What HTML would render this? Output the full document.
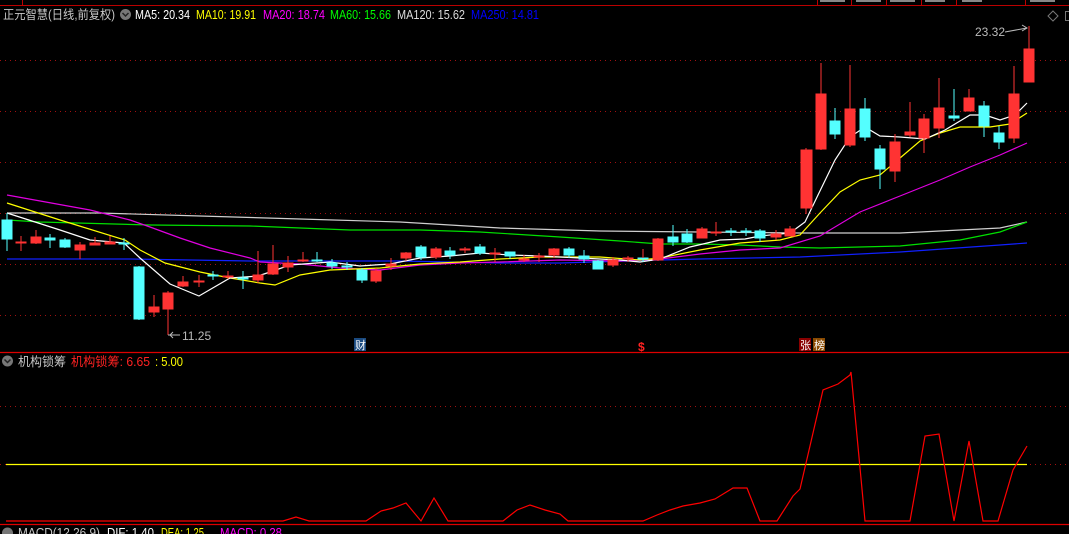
<!DOCTYPE html>
<html><head><meta charset="utf-8"><style>
html,body{margin:0;padding:0;background:#000;width:1069px;height:534px;overflow:hidden}
svg{display:block}
text{font-family:"Liberation Sans","Noto Sans CJK SC",sans-serif}
</style></head><body>
<svg width="1069" height="534" viewBox="0 0 1069 534" xmlns="http://www.w3.org/2000/svg">
<rect width="1069" height="534" fill="#000"/>
<line x1="0" y1="5.5" x2="1069" y2="5.5" stroke="#b00" stroke-width="1"/>
<line x1="22.5" y1="0" x2="22.5" y2="5" stroke="#b00"/>
<g stroke="#b00"><line x1="817.5" y1="0" x2="817.5" y2="5"/><line x1="851.5" y1="0" x2="851.5" y2="5"/><line x1="886.5" y1="0" x2="886.5" y2="5"/><line x1="921.5" y1="0" x2="921.5" y2="5"/><line x1="956.5" y1="0" x2="956.5" y2="5"/><line x1="1025.5" y1="0" x2="1025.5" y2="5"/></g>
<g fill="#888"><rect x="820" y="0" width="25" height="2"/><rect x="856" y="0" width="25" height="2"/><rect x="890" y="0" width="25" height="2"/><rect x="925" y="0" width="20" height="2"/><rect x="962" y="0" width="20" height="2"/><rect x="1030" y="0" width="25" height="2"/></g>
<text x="3" y="19" font-size="12.5" fill="#c8c8c8" textLength="112" lengthAdjust="spacingAndGlyphs">正元智慧(日线,前复权)</text>
<circle cx="125.5" cy="14.5" r="5.5" fill="#777"/><path d="M122.5 13l3 3 3-3" stroke="#222" stroke-width="1.5" fill="none"/>
<text x="135" y="19" font-size="12.5" fill="#fff" textLength="55" lengthAdjust="spacingAndGlyphs">MA5: 20.34</text>
<text x="196" y="19" font-size="12.5" fill="#ff0" textLength="60" lengthAdjust="spacingAndGlyphs">MA10: 19.91</text>
<text x="263" y="19" font-size="12.5" fill="#f0f" textLength="62" lengthAdjust="spacingAndGlyphs">MA20: 18.74</text>
<text x="330" y="19" font-size="12.5" fill="#0f0" textLength="61" lengthAdjust="spacingAndGlyphs">MA60: 15.66</text>
<text x="397" y="19" font-size="12.5" fill="#ddd" textLength="68" lengthAdjust="spacingAndGlyphs">MA120: 15.62</text>
<text x="471" y="19" font-size="12.5" fill="#00f" textLength="68" lengthAdjust="spacingAndGlyphs">MA250: 14.81</text>
<path d="M1053 11l5 5-5 5-5-5z" stroke="#777" fill="none"/>
<rect x="1065.5" y="11.5" width="8" height="9" stroke="#777" fill="none"/>
<g stroke="#a01010" stroke-dasharray="1,4">
<line x1="0" y1="60.5" x2="1069" y2="60.5"/><line x1="0" y1="111.5" x2="1069" y2="111.5"/><line x1="0" y1="162.5" x2="1069" y2="162.5"/><line x1="0" y1="213.5" x2="1069" y2="213.5"/><line x1="0" y1="264.5" x2="1069" y2="264.5"/><line x1="0" y1="315.5" x2="1069" y2="315.5"/>
<line x1="0" y1="406.5" x2="1069" y2="406.5"/><line x1="0" y1="464.5" x2="1069" y2="464.5"/>
</g>
<g fill="none" stroke-width="1.2">
<polyline stroke="#cfcfcf" points="7,213 100,213 200,216 300,219 400,222 500,228 600,231 700,232 800,233 900,233 1000,228 1027,222"/>
<polyline stroke="#00e000" points="7,220 40,222 150,225 250,226 350,230 420,230 480,232 560,237 620,241 660,244 700,244 740,245 780,247 820,248 900,246 960,240 1000,232 1027,222"/>
<polyline stroke="#1020ff" points="7,259 130,259 250,261 400,261 500,263 560,263 660,260 700,259 800,257 900,252 1000,245 1027,243"/>
<polyline stroke="#e000e0" points="7,195 90,210 130,220 150,227 180,238 210,248 250,258 260,262 300,264 340,268 380,270 420,265 460,263 500,262 560,260 620,261 660,259 700,254 740,250 780,248 820,236 860,212 900,196 940,180 970,167 1000,155 1027,143"/>
<polyline stroke="#ffff00" points="7,203 60,220 125,240 140,250 165,263 200,272 230,278 260,283 275,285 300,275 330,270 380,268 420,264 460,262 500,259 540,257 600,257 640,260 660,258 700,250 740,243 780,240 800,235 820,213 840,192 860,180 880,175 900,158 920,141 940,133 960,127 990,127 1010,124 1027,113"/>
<polyline stroke="#fff" points="7,213 60,230 90,240 124,243 140,258 170,284 199,296 230,278 245,277 258,276 273,271 290,265 330,262 360,266 390,264 420,258 450,256 480,253 510,255 540,256 580,258 620,260 640,262 660,259 690,247 720,240 745,239 760,236 790,233 805,222 818,195 835,160 850,137 865,127 880,136 900,137 925,139 945,130 970,115 985,115 1000,120 1015,115 1027,103"/>
</g>
<g stroke-width="1">
<g stroke="#54ffff" fill="#54ffff">
<line x1="7" y1="213" x2="7" y2="251"/><rect x="2" y="220" width="10" height="19"/>
<line x1="50" y1="234" x2="50" y2="248"/><rect x="45" y="238" width="10" height="2"/>
<line x1="65" y1="238" x2="65" y2="248"/><rect x="60" y="240" width="10" height="7"/>
<line x1="124" y1="238" x2="124" y2="250"/><rect x="119" y="243" width="10" height="1"/>
<line x1="139" y1="266" x2="139" y2="320"/><rect x="134" y="267" width="10" height="52"/>
<line x1="213" y1="271" x2="213" y2="280"/><rect x="208" y="275" width="10" height="1"/>
<line x1="243" y1="271" x2="243" y2="289"/><rect x="238" y="278" width="10" height="1"/>
<line x1="317" y1="252" x2="317" y2="262"/><rect x="312" y="260" width="10" height="1"/>
<line x1="332" y1="259" x2="332" y2="269"/><rect x="327" y="263" width="10" height="3"/>
<line x1="347" y1="262" x2="347" y2="270"/><rect x="342" y="266" width="10" height="1"/>
<line x1="362" y1="268" x2="362" y2="283"/><rect x="357" y="270" width="10" height="10"/>
<line x1="421" y1="245" x2="421" y2="260"/><rect x="416" y="247" width="10" height="10"/>
<line x1="450" y1="247" x2="450" y2="259"/><rect x="445" y="251" width="10" height="4"/>
<line x1="480" y1="244" x2="480" y2="255"/><rect x="475" y="247" width="10" height="6"/>
<line x1="510" y1="252" x2="510" y2="259"/><rect x="505" y="252" width="10" height="4"/>
<line x1="569" y1="247" x2="569" y2="258"/><rect x="564" y="249" width="10" height="6"/>
<line x1="584" y1="250" x2="584" y2="263"/><rect x="579" y="256" width="10" height="3"/>
<line x1="598" y1="260" x2="598" y2="269"/><rect x="593" y="261" width="10" height="8"/>
<line x1="643" y1="254" x2="643" y2="262"/><rect x="638" y="258" width="10" height="1"/>
<line x1="673" y1="225" x2="673" y2="246"/><rect x="668" y="237" width="10" height="5"/>
<line x1="687" y1="229" x2="687" y2="243"/><rect x="682" y="234" width="10" height="8"/>
<line x1="731" y1="228" x2="731" y2="236"/><rect x="726" y="231" width="10" height="1"/>
<line x1="746" y1="228" x2="746" y2="236"/><rect x="741" y="231" width="10" height="1"/>
<line x1="760" y1="229" x2="760" y2="242"/><rect x="755" y="231" width="10" height="7"/>
<line x1="835" y1="108" x2="835" y2="139"/><rect x="830" y="121" width="10" height="13"/>
<line x1="865" y1="98" x2="865" y2="141"/><rect x="860" y="109" width="10" height="28"/>
<line x1="880" y1="145" x2="880" y2="189"/><rect x="875" y="149" width="10" height="20"/>
<line x1="954" y1="89" x2="954" y2="121"/><rect x="949" y="116" width="10" height="2"/>
<line x1="984" y1="101" x2="984" y2="137"/><rect x="979" y="106" width="10" height="20"/>
<line x1="999" y1="126" x2="999" y2="149"/><rect x="994" y="133" width="10" height="9"/>
</g>
<g stroke="#ff3333" fill="#ff3333">
<line x1="21" y1="236" x2="21" y2="251"/><rect x="16" y="242" width="10" height="1"/>
<line x1="36" y1="230" x2="36" y2="244"/><rect x="31" y="237" width="10" height="6"/>
<line x1="80" y1="242" x2="80" y2="259"/><rect x="75" y="245" width="10" height="5"/>
<line x1="95" y1="237" x2="95" y2="245"/><rect x="90" y="243" width="10" height="2"/>
<line x1="110" y1="236" x2="110" y2="244"/><rect x="105" y="242" width="10" height="2"/>
<line x1="154" y1="295" x2="154" y2="317"/><rect x="149" y="307" width="10" height="5"/>
<line x1="168" y1="291" x2="168" y2="335"/><rect x="163" y="293" width="10" height="16"/>
<line x1="183" y1="276" x2="183" y2="287"/><rect x="178" y="282" width="10" height="4"/>
<line x1="199" y1="275" x2="199" y2="287"/><rect x="194" y="281" width="10" height="1"/>
<line x1="228" y1="271" x2="228" y2="279"/><rect x="223" y="276" width="10" height="1"/>
<line x1="258" y1="251" x2="258" y2="283"/><rect x="253" y="275" width="10" height="5"/>
<line x1="273" y1="245" x2="273" y2="275"/><rect x="268" y="264" width="10" height="10"/>
<line x1="288" y1="256" x2="288" y2="272"/><rect x="283" y="263" width="10" height="4"/>
<line x1="303" y1="252" x2="303" y2="262"/><rect x="298" y="260" width="10" height="1"/>
<line x1="376" y1="268" x2="376" y2="283"/><rect x="371" y="271" width="10" height="10"/>
<line x1="391" y1="258" x2="391" y2="270"/><rect x="386" y="264" width="10" height="2"/>
<line x1="406" y1="252" x2="406" y2="261"/><rect x="401" y="253" width="10" height="5"/>
<line x1="436" y1="247" x2="436" y2="259"/><rect x="431" y="249" width="10" height="8"/>
<line x1="465" y1="247" x2="465" y2="253"/><rect x="460" y="249" width="10" height="1"/>
<line x1="495" y1="248" x2="495" y2="262"/><rect x="490" y="253" width="10" height="1"/>
<line x1="524" y1="255" x2="524" y2="262"/><rect x="519" y="259" width="10" height="1"/>
<line x1="539" y1="253" x2="539" y2="262"/><rect x="534" y="256" width="10" height="1"/>
<line x1="554" y1="248" x2="554" y2="258"/><rect x="549" y="249" width="10" height="6"/>
<line x1="613" y1="257" x2="613" y2="267"/><rect x="608" y="260" width="10" height="5"/>
<line x1="628" y1="256" x2="628" y2="262"/><rect x="623" y="258" width="10" height="1"/>
<line x1="643" y1="249" x2="643" y2="258"/>
<line x1="658" y1="238" x2="658" y2="261"/><rect x="653" y="239" width="10" height="21"/>
<line x1="702" y1="227" x2="702" y2="238"/><rect x="697" y="229" width="10" height="9"/>
<line x1="716" y1="222" x2="716" y2="236"/><rect x="711" y="232" width="10" height="1"/>
<line x1="776" y1="230" x2="776" y2="240"/><rect x="771" y="234" width="10" height="3"/>
<line x1="790" y1="226" x2="790" y2="236"/><rect x="785" y="229" width="10" height="7"/>
<line x1="806" y1="148" x2="806" y2="214"/><rect x="801" y="150" width="11" height="58"/>
<line x1="821" y1="63" x2="821" y2="150"/><rect x="816" y="94" width="10" height="55"/>
<line x1="850" y1="65" x2="850" y2="147"/><rect x="845" y="109" width="10" height="36"/>
<line x1="895" y1="134" x2="895" y2="182"/><rect x="890" y="142" width="10" height="29"/>
<line x1="910" y1="102" x2="910" y2="137"/><rect x="905" y="132" width="10" height="3"/>
<line x1="924" y1="114" x2="924" y2="153"/><rect x="919" y="119" width="10" height="19"/>
<line x1="939" y1="78" x2="939" y2="138"/><rect x="934" y="108" width="10" height="20"/>
<line x1="969" y1="89" x2="969" y2="111"/><rect x="964" y="98" width="10" height="13"/>
<line x1="1014" y1="66" x2="1014" y2="143"/><rect x="1009" y="94" width="10" height="44"/>
<line x1="1029" y1="26" x2="1029" y2="82"/><rect x="1024" y="49" width="10" height="33"/>
</g>
</g>
<text x="975" y="36" font-size="12" fill="#bbb">23.32</text>
<path d="M1005 32l22-4" stroke="#bbb" fill="none"/><path d="M1022 25l5 3-5 3" stroke="#bbb" fill="none"/>
<line x1="168" y1="335" x2="180" y2="335" stroke="#bbb"/><path d="M173 332l-3 3 3 3" stroke="#bbb" fill="none"/>
<text x="182" y="340" font-size="12" fill="#bbb">11.25</text>
<rect x="354" y="338" width="12" height="13" fill="#1a4a80"/><text x="355" y="349" font-size="11" fill="#fff">财</text>
<text x="638" y="351" font-size="12" fill="#f22" font-weight="bold">$</text>
<rect x="799" y="338" width="12" height="13" fill="#8a0000"/><text x="800" y="349" font-size="11" fill="#fff">张</text>
<rect x="813" y="338" width="12" height="13" fill="#8a4a00"/><text x="814" y="349" font-size="11" fill="#fff">榜</text>
<line x1="0" y1="352.5" x2="1069" y2="352.5" stroke="#d00" stroke-width="1.3"/>
<circle cx="7.5" cy="361" r="5.5" fill="#777"/><path d="M4.5 359.5l3 3 3-3" stroke="#222" stroke-width="1.5" fill="none"/>
<text x="18" y="366" font-size="12.5" fill="#c8c8c8" textLength="48" lengthAdjust="spacingAndGlyphs">机构锁筹</text>
<text x="71" y="366" font-size="12.5" fill="#f22" textLength="79" lengthAdjust="spacingAndGlyphs">机构锁筹: 6.65</text>
<text x="155" y="366" font-size="12.5" fill="#ff0" textLength="28" lengthAdjust="spacingAndGlyphs">: 5.00</text>
<line x1="6" y1="464.5" x2="1027" y2="464.5" stroke="#ff0" stroke-width="1.3"/>
<polyline fill="none" stroke="#f00" stroke-width="1.2" points="6,521 283,521 296,517 309,521 366,521 381,511 393,508 406,503 421,521 434,498 448,521 503,521 517,510 530,505 545,510 560,514 568,521 643,521 657,515 670,510 683,506 700,503 715,499 733,488 747,488 760,521 777,521 793,496 800,489 823,390 838,384 850,375 851,372 865,521 910,521 925,436 939,434 954,521 969,441 983,521 998,521 1013,470 1027,446"/>
<line x1="0" y1="524.5" x2="1069" y2="524.5" stroke="#d00" stroke-width="1.3"/>
<circle cx="7.5" cy="533" r="5.5" fill="#777"/>
<text x="18" y="537" font-size="12.5" fill="#c8c8c8" textLength="82" lengthAdjust="spacingAndGlyphs">MACD(12,26,9)</text>
<text x="107" y="537" font-size="12.5" fill="#fff" textLength="47" lengthAdjust="spacingAndGlyphs">DIF: 1.40</text>
<text x="161" y="537" font-size="12.5" fill="#ff0" textLength="43" lengthAdjust="spacingAndGlyphs">DEA: 1.25</text>
<text x="220" y="537" font-size="12.5" fill="#f0f" textLength="62" lengthAdjust="spacingAndGlyphs">MACD: 0.28</text>
</svg>
</body></html>
